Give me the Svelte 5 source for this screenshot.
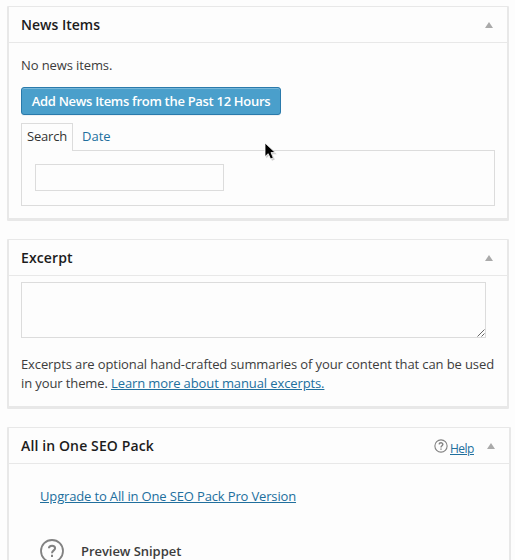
<script>
  let query = $state('');
  let excerpt = $state('');
</script>

{#snippet arrow()}
  <svg class="toggle" width="8" height="6" viewBox="0 0 8 6"><path d="M4 0L8 6H0Z" fill="#aaa" /></svg>
{/snippet}

<main>
  <section class="box news">
    <header><h3>News Items</h3>{@render arrow()}</header>
    <div class="inside">
      <p class="empty">No news items.</p>
      <button>Add News Items from the Past 12 Hours</button>
      <nav>
        <span class="tab active">Search</span>
        <a class="tab date">Date</a>
      </nav>
      <div class="panel"><input bind:value={query} aria-label="Search" /></div>
    </div>
  </section>

  <section class="box excerpt">
    <header><h3 class="wide">Excerpt</h3>{@render arrow()}</header>
    <div class="inside">
      <div class="area">
        <textarea bind:value={excerpt} aria-label="Excerpt"></textarea>
        <svg class="grip" width="8" height="8" viewBox="0 0 8 8"><path d="M0.5 7.5L7.5 0.5M4.5 7.5L7.5 4.5" stroke="#555" stroke-width="0.9" /></svg>
      </div>
      <p class="note">
        Excerpts are optional hand-crafted summaries of your content that can be used<br />
        in your theme. <a>Learn more about manual excerpts.</a>
      </p>
    </div>
  </section>

  <section class="box seo">
    <header>
      <h3 class="wide">All in One SEO Pack</h3>
      <span class="help">
        <svg width="14" height="14" viewBox="0 0 24 24" fill="none" stroke="#828282"><circle cx="12" cy="12" r="10.5" stroke-width="1.9" /><path d="M8.8 9.2C8.9 5.6 15.2 5.6 15.2 9.2C15.2 11.6 12 11.5 12 14.4M12 16.2V18.6" stroke-width="2.4" /></svg>
        <a>Help</a>
      </span>
      {@render arrow()}
    </header>
    <div class="seo-body">
      <a class="upgrade">Upgrade to All in One SEO Pack Pro Version</a>
      <div class="row">
        <svg width="24" height="24" viewBox="0 0 24 24" fill="none" stroke="#828282"><circle cx="12" cy="12" r="11" stroke-width="1.8" /><path d="M8.9 9.3C9 5.8 15.1 5.8 15.1 9.3C15.1 11.5 12 11.4 12 14.3M12 15.8V18" stroke-width="2" /></svg>
        <strong>Preview Snippet</strong>
      </div>
    </div>
  </section>

  <svg class="cursor" width="14" height="20" viewBox="0 0 14 20">
    <path d="M1.5 1V15L4.7 12L7.2 17.6L10 16.3L7.6 11H12Z" fill="#888" opacity=".4" transform="translate(.8 1.2)" />
    <path d="M1 1V14.6L4.2 11.7L6.6 17L9.3 15.8L7 10.6H11.2Z" fill="#000" stroke="#fff" stroke-width=".8" />
  </svg>
</main>

<style>
  :global(body) { margin: 0; background: #fdfdfd; overflow: hidden; }
  main {
    position: relative;
    box-sizing: border-box;
    height: 560px;
    overflow: hidden;
    padding: 6px 0 0 7px;
    background: #fdfdfd;
    color: #3c3c3c;
    font: 13px/19px "Open Sans", sans-serif;
    letter-spacing: -0.11px;
  }
  .box {
    box-sizing: border-box;
    width: 502px;
    border: solid #e8e8e8;
    border-width: 1px 2px 3px;
    border-radius: 1px;
    margin-bottom: 18px;
  }
  .news { height: 215px; }
  .excerpt { height: 170px; }
  .seo { width: 504px; height: 180px; }
  header {
    display: flex;
    align-items: center;
    height: 35px;
    padding: 0 14px 0 12px;
    border-bottom: 1px solid #e8e8e8;
  }
  h3 { flex: 1; margin: 0; font-size: 14px; font-weight: 600; line-height: 20px; color: #1c1c1c; letter-spacing: 0; white-space: nowrap; }
  h3.wide { letter-spacing: 0.12px; }
  p { margin: 0; }
  a { color: #216f9d; text-decoration: underline; }
  .inside { padding: 0 12px; }
  .empty { padding-top: 13px; }
  button {
    display: block;
    box-sizing: border-box;
    width: 260px;
    height: 28px;
    margin-top: 12px;
    padding: 0;
    border: 1px solid #2a7aab;
    border-radius: 3px;
    background: #4a9fcb;
    box-shadow: inset 0 1px 0 #79b8da, 0 1px 0 #eef1f3;
    color: #fff;
    font: 600 13px/26px "Open Sans", sans-serif;
    letter-spacing: -0.3px;
    white-space: nowrap;
  }
  nav { display: flex; height: 27px; margin-top: 8px; }
  .tab { box-sizing: border-box; height: 28px; padding: 3px 0 0 5px; white-space: nowrap; }
  .active { position: relative; z-index: 1; width: 52px; border: 1px solid #dcdcdc; border-bottom: 0; background: #fdfdfd; color: #333; letter-spacing: -0.2px; }
  .date { padding: 4px 0 0 9px; text-decoration: none; letter-spacing: 0; }
  .panel { box-sizing: border-box; width: 474px; height: 56px; padding: 13px; border: 1px solid #dcdcdc; }
  input { display: block; box-sizing: border-box; width: 189px; height: 27px; border: 1px solid #dcdcdc; background: #fdfdfd; outline: 0; }
  .area { position: relative; width: 465px; padding-top: 6px; }
  textarea { display: block; box-sizing: border-box; width: 465px; height: 56px; border: 1px solid #dcdcdc; background: #fdfdfd; resize: none; outline: 0; }
  .grip { position: absolute; right: 1px; bottom: 1px; }
  .note { padding-top: 17px; white-space: nowrap; }
  .help { display: flex; gap: 2px; margin: 3px 13px 0 0; }
  .help svg { margin-top: 4px; }
  .help a { width: 24px; line-height: 20px; padding-top: 4px; font-size: 12px; letter-spacing: -0.5px; }
  .seo-body { display: flex; flex-direction: column; align-items: flex-start; padding: 23px 31px; }
  .upgrade { letter-spacing: -0.15px; }
  .row { display: flex; align-items: center; gap: 17px; margin-top: 33px; }
  strong { font-weight: 600; letter-spacing: -0.05px; }
  .cursor { position: absolute; left: 264px; top: 142px; }
</style>
